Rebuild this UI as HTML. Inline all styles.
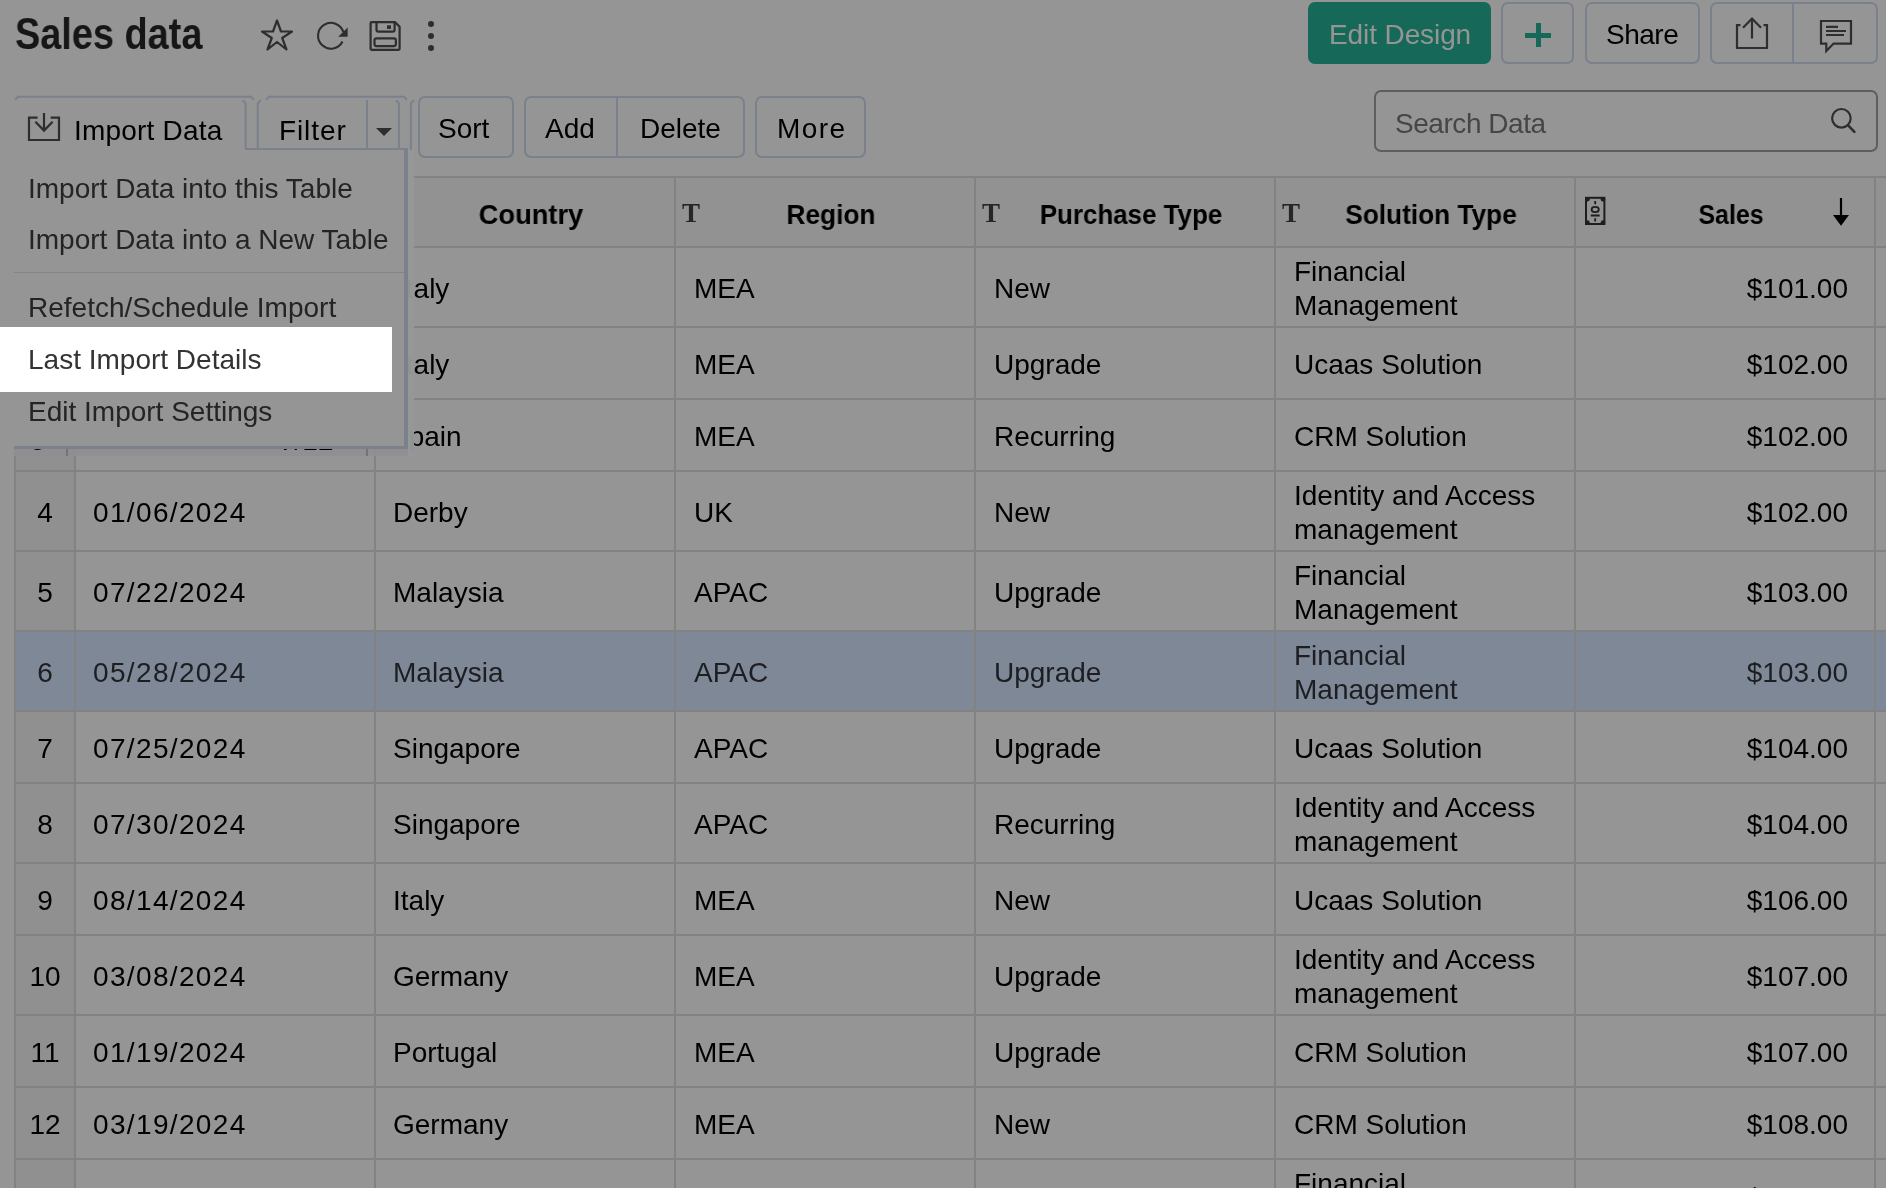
<!DOCTYPE html>
<html><head><meta charset="utf-8"><title>Sales data</title>
<style>
html,body{margin:0;padding:0;}
body{-webkit-font-smoothing:antialiased;width:1886px;height:1188px;overflow:hidden;background:#959595;position:relative;font-family:"Liberation Sans", sans-serif;}
.t{position:absolute;white-space:nowrap;will-change:transform;}
.r{position:absolute;}
</style></head><body>
<div class="t" style="left:15px;top:12.25px;font-size:44px;line-height:44px;font-weight:bold;color:#161616;transform:scaleX(0.861);transform-origin:0 0;">Sales data</div>
<svg class="r" style="left:258px;top:16px;" width="38" height="38" viewBox="0 0 38 38"><path d="M19 4.5 L23 15.5 L34 15.5 L24.2 22 L28.5 33.5 L19 26 L9.5 33.5 L13.8 22 L4 15.5 L15 15.5 Z" fill="none" stroke="#2e2e2e" stroke-width="2.2" stroke-linejoin="round"/></svg>
<svg class="r" style="left:314px;top:18px;" width="38" height="36" viewBox="0 0 38 36"><path d="M28.5 23.5 A12.9 12.9 0 1 1 29.3 14" fill="none" stroke="#2e2e2e" stroke-width="2.1"/><path d="M33.6 9.5 L33.6 18.8 L24.2 18.8 Z" fill="#2e2e2e"/></svg>
<svg class="r" style="left:366px;top:18px;" width="38" height="36" viewBox="0 0 38 36"><path d="M4.6 5.2 Q4.6 4.2 5.6 4.2 L29 4.2 L33.6 8.8 L33.6 30.8 Q33.6 31.8 32.6 31.8 L5.6 31.8 Q4.6 31.8 4.6 30.8 Z" fill="none" stroke="#2e2e2e" stroke-width="2.2"/><path d="M10.5 4.2 L10.5 11.8 Q10.5 13.6 12.3 13.6 L26.8 13.6 Q28.6 13.6 28.6 11.8 L28.6 4.2" fill="none" stroke="#2e2e2e" stroke-width="2.2"/><rect x="21" y="7.3" width="4" height="3.6" fill="#2e2e2e"/><rect x="8.5" y="20.3" width="21.4" height="7.8" rx="2" fill="none" stroke="#2e2e2e" stroke-width="2.2"/></svg>
<svg class="r" style="left:425px;top:18px;" width="12" height="36" viewBox="0 0 12 36"><circle cx="6" cy="6" r="3" fill="#2e2e2e"/><circle cx="6" cy="18" r="3" fill="#2e2e2e"/><circle cx="6" cy="30" r="3" fill="#2e2e2e"/></svg>
<div class="r" style="left:1308px;top:2px;width:183px;height:62px;background:#166958;border-radius:7px;"></div>
<div class="t" style="left:1329px;top:21.39px;font-size:28px;line-height:28px;font-weight:normal;color:#959595;letter-spacing:-0.1px;">Edit Design</div>
<div class="r" style="left:1501px;top:2px;width:73px;height:62px;border:2px solid #7a808c;border-radius:7px;box-sizing:border-box;"></div>
<div class="r" style="left:1525px;top:33px;width:26px;height:4.5px;background:#166958;"></div>
<div class="r" style="left:1536px;top:23px;width:4.5px;height:24px;background:#166958;"></div>
<div class="r" style="left:1585px;top:2px;width:115px;height:62px;border:2px solid #7a808c;border-radius:7px;box-sizing:border-box;"></div>
<div class="t" style="left:1606px;top:21.39px;font-size:28px;line-height:28px;font-weight:normal;color:#000;letter-spacing:-0.5px;">Share</div>
<div class="r" style="left:1710px;top:2px;width:168px;height:62px;border:2px solid #7a808c;border-radius:7px;box-sizing:border-box;"></div>
<div class="r" style="left:1792px;top:2px;width:2px;height:62px;background:#7a808c;"></div>
<svg class="r" style="left:1730px;top:12px;" width="44" height="42" viewBox="0 0 44 42"><path d="M10.5 13.2 L7 13.2 L7 36 L37 36 L37 13.2 L33.5 13.2" fill="none" stroke="#2e2e2e" stroke-width="2.2"/><path d="M22 6.5 L22 26.5 M13 15.8 L22 6.6 L31 15.8" fill="none" stroke="#2e2e2e" stroke-width="2.2"/></svg>
<svg class="r" style="left:1814px;top:14px;" width="44" height="42" viewBox="0 0 44 42"><path d="M7 7 L37 7 L37 29.6 L19.6 29.6 L12.3 37 L12.3 29.6 L7 29.6 Z" fill="none" stroke="#2e2e2e" stroke-width="2.2"/><path d="M12 12.9 L24 12.9 M12 17 L32 17 M12 21 L30 21" fill="none" stroke="#2e2e2e" stroke-width="2.2"/></svg>
<svg class="r" style="left:24px;top:108px;" width="40" height="38" viewBox="0 0 40 38"><path d="M13.6 9.6 L5 9.6 L5 32 L35 32 L35 9.6 L26.7 9.6" fill="none" stroke="#2e2e2e" stroke-width="2.2"/><path d="M20 5 L20 23 M11.4 13.8 L20 22.6 L28.6 13.8" fill="none" stroke="#2e2e2e" stroke-width="2.2"/></svg>
<div class="t" style="left:74px;top:116.79px;font-size:28px;line-height:28px;font-weight:normal;color:#000;letter-spacing:0.2px;">Import Data</div>
<svg class="r" style="left:0px;top:0px" width="430" height="170" viewBox="0 0 430 170"><g fill="none" stroke="#7a808c" stroke-width="2"><path d="M15 99.7 L18 96.7 L251 96.7 L254 99.7"/><path d="M266 99.7 L269 96.7 L404 96.7 L407 99.7"/><path d="M242.6 100.3 L245.6 103.3 L245.6 149"/><path d="M260.7 100.3 L257.7 103.3 L257.7 148"/><path d="M367 100 L367 148"/><path d="M395.9 100.3 L398.9 103.3 L398.9 148"/><path d="M413.9 100.3 L410.9 103.3 L410.9 155 L413.9 158"/></g></svg>
<div class="t" style="left:279px;top:116.79px;font-size:28px;line-height:28px;font-weight:normal;color:#000;letter-spacing:0.9px;">Filter</div>
<svg class="r" style="left:374px;top:126px;" width="20" height="12" viewBox="0 0 20 12"><path d="M2 2 L18 2 L10 10 Z" fill="#2e2e2e"/></svg>
<div class="r" style="left:418px;top:96px;width:96px;height:62px;border:2px solid #7a808c;border-radius:7px;box-sizing:border-box;"></div>
<div class="t" style="left:438px;top:114.79px;font-size:28px;line-height:28px;font-weight:normal;color:#000;">Sort</div>
<div class="r" style="left:524px;top:96px;width:221px;height:62px;border:2px solid #7a808c;border-radius:7px;box-sizing:border-box;"></div>
<div class="r" style="left:616px;top:96px;width:2px;height:62px;background:#7a808c;"></div>
<div class="t" style="left:545px;top:114.79px;font-size:28px;line-height:28px;font-weight:normal;color:#000;">Add</div>
<div class="t" style="left:640px;top:114.79px;font-size:28px;line-height:28px;font-weight:normal;color:#000;">Delete</div>
<div class="r" style="left:755px;top:96px;width:111px;height:62px;border:2px solid #7a808c;border-radius:7px;box-sizing:border-box;"></div>
<div class="t" style="left:777px;top:114.79px;font-size:28px;line-height:28px;font-weight:normal;color:#000;letter-spacing:1.4px;">More</div>
<div class="r" style="left:1374px;top:90px;width:504px;height:62px;border:2px solid #5e5e5e;border-radius:7px;box-sizing:border-box;"></div>
<div class="t" style="left:1395px;top:110.09px;font-size:28px;line-height:28px;font-weight:normal;color:#464646;letter-spacing:-0.45px;">Search Data</div>
<svg class="r" style="left:1826px;top:104px;" width="34" height="34" viewBox="0 0 34 34"><circle cx="15.4" cy="14.3" r="9.3" fill="none" stroke="#2e2e2e" stroke-width="2.2"/><path d="M22.4 21.6 L28.4 27.8" stroke="#2e2e2e" stroke-width="2.6" stroke-linecap="round"/></svg>
<div class="r" style="left:14px;top:176px;width:1872px;height:72px;background:#929292;"></div>
<div class="r" style="left:14px;top:176px;width:1872px;height:2px;background:#828282;"></div>
<div class="r" style="left:14px;top:246px;width:1872px;height:2px;background:#828282;"></div>
<div class="r" style="left:76px;top:248px;width:1810px;height:78px;background:#959595;"></div>
<div class="r" style="left:16px;top:248px;width:58px;height:78px;background:#909090;"></div>
<div class="r" style="left:14px;top:326px;width:1872px;height:2px;background:#828282;"></div>
<div class="r" style="left:76px;top:328px;width:1810px;height:70px;background:#959595;"></div>
<div class="r" style="left:16px;top:328px;width:58px;height:70px;background:#909090;"></div>
<div class="r" style="left:14px;top:398px;width:1872px;height:2px;background:#828282;"></div>
<div class="r" style="left:76px;top:400px;width:1810px;height:70px;background:#959595;"></div>
<div class="r" style="left:16px;top:400px;width:58px;height:70px;background:#909090;"></div>
<div class="r" style="left:14px;top:470px;width:1872px;height:2px;background:#828282;"></div>
<div class="r" style="left:76px;top:472px;width:1810px;height:78px;background:#959595;"></div>
<div class="r" style="left:16px;top:472px;width:58px;height:78px;background:#909090;"></div>
<div class="r" style="left:14px;top:550px;width:1872px;height:2px;background:#828282;"></div>
<div class="r" style="left:76px;top:552px;width:1810px;height:78px;background:#959595;"></div>
<div class="r" style="left:16px;top:552px;width:58px;height:78px;background:#909090;"></div>
<div class="r" style="left:14px;top:630px;width:1872px;height:2px;background:#828282;"></div>
<div class="r" style="left:14px;top:632px;width:1872px;height:78px;background:#7e8896;"></div>
<div class="r" style="left:14px;top:710px;width:1872px;height:2px;background:#828282;"></div>
<div class="r" style="left:76px;top:712px;width:1810px;height:70px;background:#959595;"></div>
<div class="r" style="left:16px;top:712px;width:58px;height:70px;background:#909090;"></div>
<div class="r" style="left:14px;top:782px;width:1872px;height:2px;background:#828282;"></div>
<div class="r" style="left:76px;top:784px;width:1810px;height:78px;background:#959595;"></div>
<div class="r" style="left:16px;top:784px;width:58px;height:78px;background:#909090;"></div>
<div class="r" style="left:14px;top:862px;width:1872px;height:2px;background:#828282;"></div>
<div class="r" style="left:76px;top:864px;width:1810px;height:70px;background:#959595;"></div>
<div class="r" style="left:16px;top:864px;width:58px;height:70px;background:#909090;"></div>
<div class="r" style="left:14px;top:934px;width:1872px;height:2px;background:#828282;"></div>
<div class="r" style="left:76px;top:936px;width:1810px;height:78px;background:#959595;"></div>
<div class="r" style="left:16px;top:936px;width:58px;height:78px;background:#909090;"></div>
<div class="r" style="left:14px;top:1014px;width:1872px;height:2px;background:#828282;"></div>
<div class="r" style="left:76px;top:1016px;width:1810px;height:70px;background:#959595;"></div>
<div class="r" style="left:16px;top:1016px;width:58px;height:70px;background:#909090;"></div>
<div class="r" style="left:14px;top:1086px;width:1872px;height:2px;background:#828282;"></div>
<div class="r" style="left:76px;top:1088px;width:1810px;height:70px;background:#959595;"></div>
<div class="r" style="left:16px;top:1088px;width:58px;height:70px;background:#909090;"></div>
<div class="r" style="left:14px;top:1158px;width:1872px;height:2px;background:#828282;"></div>
<div class="r" style="left:76px;top:1160px;width:1810px;height:78px;background:#959595;"></div>
<div class="r" style="left:16px;top:1160px;width:58px;height:78px;background:#909090;"></div>
<div class="r" style="left:14px;top:1238px;width:1872px;height:2px;background:#828282;"></div>
<div class="r" style="left:14px;top:176px;width:2px;height:1012px;background:#828282;"></div>
<div class="r" style="left:74px;top:176px;width:2px;height:1012px;background:#828282;"></div>
<div class="r" style="left:374px;top:176px;width:2px;height:1012px;background:#828282;"></div>
<div class="r" style="left:674px;top:176px;width:2px;height:1012px;background:#828282;"></div>
<div class="r" style="left:974px;top:176px;width:2px;height:1012px;background:#828282;"></div>
<div class="r" style="left:1274px;top:176px;width:2px;height:1012px;background:#828282;"></div>
<div class="r" style="left:1574px;top:176px;width:2px;height:1012px;background:#828282;"></div>
<div class="r" style="left:1874px;top:176px;width:2px;height:1012px;background:#828282;"></div>
<div class="t" style="left:381px;top:201.29px;width:300px;text-align:center;font-size:28px;line-height:28px;font-weight:bold;color:#000;transform:scaleX(0.9736);transform-origin:150px 0">Country</div>
<div class="t" style="left:681px;top:201.29px;width:300px;text-align:center;font-size:28px;line-height:28px;font-weight:bold;color:#000;transform:scaleX(0.9385);transform-origin:150px 0">Region</div>
<div class="t" style="left:981px;top:201.29px;width:300px;text-align:center;font-size:28px;line-height:28px;font-weight:bold;color:#000;transform:scaleX(0.9253);transform-origin:150px 0">Purchase Type</div>
<div class="t" style="left:1281px;top:201.29px;width:300px;text-align:center;font-size:28px;line-height:28px;font-weight:bold;color:#000;transform:scaleX(0.937);transform-origin:150px 0">Solution Type</div>
<div class="t" style="left:1581px;top:201.29px;width:300px;text-align:center;font-size:28px;line-height:28px;font-weight:bold;color:#000;transform:scaleX(0.8915);transform-origin:150px 0">Sales</div>
<div class="t" style="left:682px;top:200.14px;font-size:27px;line-height:27px;font-weight:bold;color:#262626;font-family:'Liberation Serif', serif;">T</div>
<div class="t" style="left:982px;top:200.14px;font-size:27px;line-height:27px;font-weight:bold;color:#262626;font-family:'Liberation Serif', serif;">T</div>
<div class="t" style="left:1282px;top:200.14px;font-size:27px;line-height:27px;font-weight:bold;color:#262626;font-family:'Liberation Serif', serif;">T</div>
<div class="t" style="left:382px;top:200.14px;font-size:27px;line-height:27px;font-weight:bold;color:#262626;font-family:'Liberation Serif', serif;">T</div>
<svg class="r" style="left:1582px;top:194px;" width="26" height="34" viewBox="0 0 26 34"><rect x="4" y="3.8" width="18.4" height="26.2" fill="none" stroke="#1e1e1e" stroke-width="2"/><circle cx="5.4" cy="5.2" r="2.3" fill="#1e1e1e"/><circle cx="21" cy="5.2" r="2.3" fill="#1e1e1e"/><circle cx="5.4" cy="28.6" r="2.3" fill="#1e1e1e"/><circle cx="21" cy="28.6" r="2.3" fill="#1e1e1e"/><path d="M13.2 7 L13.2 10.2 M13.2 24.2 L13.2 27.4 M8.8 21.5 L17.6 21.5" stroke="#1e1e1e" stroke-width="1.8"/><ellipse cx="13.2" cy="15.5" rx="3.6" ry="2.6" fill="none" stroke="#1e1e1e" stroke-width="1.8"/></svg>
<svg class="r" style="left:1830px;top:196px;" width="22" height="32" viewBox="0 0 22 32"><path d="M11 2 L11 20" stroke="#000" stroke-width="2.2"/><path d="M3 19 L19 19 L11 29.8 Z" fill="#000"/></svg>
<div class="t" style="left:16px;top:274.79px;font-size:28px;line-height:28px;font-weight:normal;color:#000;text-align:center;width:58px;">1</div>
<div class="t" style="left:398px;top:274.79px;font-size:28px;line-height:28px;font-weight:normal;color:#000;">Italy</div>
<div class="t" style="left:694px;top:274.79px;font-size:28px;line-height:28px;font-weight:normal;color:#000;">MEA</div>
<div class="t" style="left:994px;top:274.79px;font-size:28px;line-height:28px;font-weight:normal;color:#000;">New</div>
<div class="t" style="left:1294px;top:257.79px;font-size:28px;line-height:28px;font-weight:normal;color:#000;">Financial</div>
<div class="t" style="left:1294px;top:291.79px;font-size:28px;line-height:28px;font-weight:normal;color:#000;">Management</div>
<div class="t" style="left:1576px;top:274.79px;font-size:28px;line-height:28px;font-weight:normal;color:#000;text-align:right;width:272px;">$101.00</div>
<div class="t" style="left:16px;top:350.79px;font-size:28px;line-height:28px;font-weight:normal;color:#000;text-align:center;width:58px;">2</div>
<div class="t" style="left:398px;top:350.79px;font-size:28px;line-height:28px;font-weight:normal;color:#000;">Italy</div>
<div class="t" style="left:694px;top:350.79px;font-size:28px;line-height:28px;font-weight:normal;color:#000;">MEA</div>
<div class="t" style="left:994px;top:350.79px;font-size:28px;line-height:28px;font-weight:normal;color:#000;">Upgrade</div>
<div class="t" style="left:1294px;top:350.79px;font-size:28px;line-height:28px;font-weight:normal;color:#000;">Ucaas Solution</div>
<div class="t" style="left:1576px;top:350.79px;font-size:28px;line-height:28px;font-weight:normal;color:#000;text-align:right;width:272px;">$102.00</div>
<div class="t" style="left:16px;top:422.79px;font-size:28px;line-height:28px;font-weight:normal;color:#000;text-align:center;width:58px;">3</div>
<div class="t" style="left:390px;top:422.79px;font-size:28px;line-height:28px;font-weight:normal;color:#000;">Spain</div>
<div class="t" style="left:694px;top:422.79px;font-size:28px;line-height:28px;font-weight:normal;color:#000;">MEA</div>
<div class="t" style="left:994px;top:422.79px;font-size:28px;line-height:28px;font-weight:normal;color:#000;">Recurring</div>
<div class="t" style="left:1294px;top:422.79px;font-size:28px;line-height:28px;font-weight:normal;color:#000;">CRM Solution</div>
<div class="t" style="left:1576px;top:422.79px;font-size:28px;line-height:28px;font-weight:normal;color:#000;text-align:right;width:272px;">$102.00</div>
<div class="t" style="left:16px;top:498.79px;font-size:28px;line-height:28px;font-weight:normal;color:#000;text-align:center;width:58px;">4</div>
<div class="t" style="left:93px;top:498.79px;font-size:28px;line-height:28px;font-weight:normal;color:#000;letter-spacing:1.35px;">01/06/2024</div>
<div class="t" style="left:393px;top:498.79px;font-size:28px;line-height:28px;font-weight:normal;color:#000;">Derby</div>
<div class="t" style="left:694px;top:498.79px;font-size:28px;line-height:28px;font-weight:normal;color:#000;">UK</div>
<div class="t" style="left:994px;top:498.79px;font-size:28px;line-height:28px;font-weight:normal;color:#000;">New</div>
<div class="t" style="left:1294px;top:481.79px;font-size:28px;line-height:28px;font-weight:normal;color:#000;">Identity and Access</div>
<div class="t" style="left:1294px;top:515.79px;font-size:28px;line-height:28px;font-weight:normal;color:#000;">management</div>
<div class="t" style="left:1576px;top:498.79px;font-size:28px;line-height:28px;font-weight:normal;color:#000;text-align:right;width:272px;">$102.00</div>
<div class="t" style="left:16px;top:578.79px;font-size:28px;line-height:28px;font-weight:normal;color:#000;text-align:center;width:58px;">5</div>
<div class="t" style="left:93px;top:578.79px;font-size:28px;line-height:28px;font-weight:normal;color:#000;letter-spacing:1.35px;">07/22/2024</div>
<div class="t" style="left:393px;top:578.79px;font-size:28px;line-height:28px;font-weight:normal;color:#000;">Malaysia</div>
<div class="t" style="left:694px;top:578.79px;font-size:28px;line-height:28px;font-weight:normal;color:#000;">APAC</div>
<div class="t" style="left:994px;top:578.79px;font-size:28px;line-height:28px;font-weight:normal;color:#000;">Upgrade</div>
<div class="t" style="left:1294px;top:561.79px;font-size:28px;line-height:28px;font-weight:normal;color:#000;">Financial</div>
<div class="t" style="left:1294px;top:595.79px;font-size:28px;line-height:28px;font-weight:normal;color:#000;">Management</div>
<div class="t" style="left:1576px;top:578.79px;font-size:28px;line-height:28px;font-weight:normal;color:#000;text-align:right;width:272px;">$103.00</div>
<div class="t" style="left:16px;top:658.79px;font-size:28px;line-height:28px;font-weight:normal;color:#1c1e22;text-align:center;width:58px;">6</div>
<div class="t" style="left:93px;top:658.79px;font-size:28px;line-height:28px;font-weight:normal;color:#1c1e22;letter-spacing:1.35px;">05/28/2024</div>
<div class="t" style="left:393px;top:658.79px;font-size:28px;line-height:28px;font-weight:normal;color:#1c1e22;">Malaysia</div>
<div class="t" style="left:694px;top:658.79px;font-size:28px;line-height:28px;font-weight:normal;color:#1c1e22;">APAC</div>
<div class="t" style="left:994px;top:658.79px;font-size:28px;line-height:28px;font-weight:normal;color:#1c1e22;">Upgrade</div>
<div class="t" style="left:1294px;top:641.79px;font-size:28px;line-height:28px;font-weight:normal;color:#1c1e22;">Financial</div>
<div class="t" style="left:1294px;top:675.79px;font-size:28px;line-height:28px;font-weight:normal;color:#1c1e22;">Management</div>
<div class="t" style="left:1576px;top:658.79px;font-size:28px;line-height:28px;font-weight:normal;color:#1c1e22;text-align:right;width:272px;">$103.00</div>
<div class="t" style="left:16px;top:734.79px;font-size:28px;line-height:28px;font-weight:normal;color:#000;text-align:center;width:58px;">7</div>
<div class="t" style="left:93px;top:734.79px;font-size:28px;line-height:28px;font-weight:normal;color:#000;letter-spacing:1.35px;">07/25/2024</div>
<div class="t" style="left:393px;top:734.79px;font-size:28px;line-height:28px;font-weight:normal;color:#000;">Singapore</div>
<div class="t" style="left:694px;top:734.79px;font-size:28px;line-height:28px;font-weight:normal;color:#000;">APAC</div>
<div class="t" style="left:994px;top:734.79px;font-size:28px;line-height:28px;font-weight:normal;color:#000;">Upgrade</div>
<div class="t" style="left:1294px;top:734.79px;font-size:28px;line-height:28px;font-weight:normal;color:#000;">Ucaas Solution</div>
<div class="t" style="left:1576px;top:734.79px;font-size:28px;line-height:28px;font-weight:normal;color:#000;text-align:right;width:272px;">$104.00</div>
<div class="t" style="left:16px;top:810.79px;font-size:28px;line-height:28px;font-weight:normal;color:#000;text-align:center;width:58px;">8</div>
<div class="t" style="left:93px;top:810.79px;font-size:28px;line-height:28px;font-weight:normal;color:#000;letter-spacing:1.35px;">07/30/2024</div>
<div class="t" style="left:393px;top:810.79px;font-size:28px;line-height:28px;font-weight:normal;color:#000;">Singapore</div>
<div class="t" style="left:694px;top:810.79px;font-size:28px;line-height:28px;font-weight:normal;color:#000;">APAC</div>
<div class="t" style="left:994px;top:810.79px;font-size:28px;line-height:28px;font-weight:normal;color:#000;">Recurring</div>
<div class="t" style="left:1294px;top:793.79px;font-size:28px;line-height:28px;font-weight:normal;color:#000;">Identity and Access</div>
<div class="t" style="left:1294px;top:827.79px;font-size:28px;line-height:28px;font-weight:normal;color:#000;">management</div>
<div class="t" style="left:1576px;top:810.79px;font-size:28px;line-height:28px;font-weight:normal;color:#000;text-align:right;width:272px;">$104.00</div>
<div class="t" style="left:16px;top:886.79px;font-size:28px;line-height:28px;font-weight:normal;color:#000;text-align:center;width:58px;">9</div>
<div class="t" style="left:93px;top:886.79px;font-size:28px;line-height:28px;font-weight:normal;color:#000;letter-spacing:1.35px;">08/14/2024</div>
<div class="t" style="left:393px;top:886.79px;font-size:28px;line-height:28px;font-weight:normal;color:#000;">Italy</div>
<div class="t" style="left:694px;top:886.79px;font-size:28px;line-height:28px;font-weight:normal;color:#000;">MEA</div>
<div class="t" style="left:994px;top:886.79px;font-size:28px;line-height:28px;font-weight:normal;color:#000;">New</div>
<div class="t" style="left:1294px;top:886.79px;font-size:28px;line-height:28px;font-weight:normal;color:#000;">Ucaas Solution</div>
<div class="t" style="left:1576px;top:886.79px;font-size:28px;line-height:28px;font-weight:normal;color:#000;text-align:right;width:272px;">$106.00</div>
<div class="t" style="left:16px;top:962.79px;font-size:28px;line-height:28px;font-weight:normal;color:#000;text-align:center;width:58px;">10</div>
<div class="t" style="left:93px;top:962.79px;font-size:28px;line-height:28px;font-weight:normal;color:#000;letter-spacing:1.35px;">03/08/2024</div>
<div class="t" style="left:393px;top:962.79px;font-size:28px;line-height:28px;font-weight:normal;color:#000;">Germany</div>
<div class="t" style="left:694px;top:962.79px;font-size:28px;line-height:28px;font-weight:normal;color:#000;">MEA</div>
<div class="t" style="left:994px;top:962.79px;font-size:28px;line-height:28px;font-weight:normal;color:#000;">Upgrade</div>
<div class="t" style="left:1294px;top:945.79px;font-size:28px;line-height:28px;font-weight:normal;color:#000;">Identity and Access</div>
<div class="t" style="left:1294px;top:979.79px;font-size:28px;line-height:28px;font-weight:normal;color:#000;">management</div>
<div class="t" style="left:1576px;top:962.79px;font-size:28px;line-height:28px;font-weight:normal;color:#000;text-align:right;width:272px;">$107.00</div>
<div class="t" style="left:16px;top:1038.79px;font-size:28px;line-height:28px;font-weight:normal;color:#000;text-align:center;width:58px;">11</div>
<div class="t" style="left:93px;top:1038.79px;font-size:28px;line-height:28px;font-weight:normal;color:#000;letter-spacing:1.35px;">01/19/2024</div>
<div class="t" style="left:393px;top:1038.79px;font-size:28px;line-height:28px;font-weight:normal;color:#000;">Portugal</div>
<div class="t" style="left:694px;top:1038.79px;font-size:28px;line-height:28px;font-weight:normal;color:#000;">MEA</div>
<div class="t" style="left:994px;top:1038.79px;font-size:28px;line-height:28px;font-weight:normal;color:#000;">Upgrade</div>
<div class="t" style="left:1294px;top:1038.79px;font-size:28px;line-height:28px;font-weight:normal;color:#000;">CRM Solution</div>
<div class="t" style="left:1576px;top:1038.79px;font-size:28px;line-height:28px;font-weight:normal;color:#000;text-align:right;width:272px;">$107.00</div>
<div class="t" style="left:16px;top:1110.79px;font-size:28px;line-height:28px;font-weight:normal;color:#000;text-align:center;width:58px;">12</div>
<div class="t" style="left:93px;top:1110.79px;font-size:28px;line-height:28px;font-weight:normal;color:#000;letter-spacing:1.35px;">03/19/2024</div>
<div class="t" style="left:393px;top:1110.79px;font-size:28px;line-height:28px;font-weight:normal;color:#000;">Germany</div>
<div class="t" style="left:694px;top:1110.79px;font-size:28px;line-height:28px;font-weight:normal;color:#000;">MEA</div>
<div class="t" style="left:994px;top:1110.79px;font-size:28px;line-height:28px;font-weight:normal;color:#000;">New</div>
<div class="t" style="left:1294px;top:1110.79px;font-size:28px;line-height:28px;font-weight:normal;color:#000;">CRM Solution</div>
<div class="t" style="left:1576px;top:1110.79px;font-size:28px;line-height:28px;font-weight:normal;color:#000;text-align:right;width:272px;">$108.00</div>
<div class="t" style="left:16px;top:1186.79px;font-size:28px;line-height:28px;font-weight:normal;color:#000;text-align:center;width:58px;">13</div>
<div class="t" style="left:1294px;top:1169.79px;font-size:28px;line-height:28px;font-weight:normal;color:#000;">Financial</div>
<div class="t" style="left:1294px;top:1203.79px;font-size:28px;line-height:28px;font-weight:normal;color:#000;">Management</div>
<div class="t" style="left:1576px;top:1183.79px;font-size:28px;line-height:28px;font-weight:normal;color:#000;text-align:right;width:272px;">$108.00</div>
<div class="r" style="left:14px;top:150px;width:390px;height:296px;background:#959595;"></div>
<div class="r" style="left:245px;top:148px;width:161px;height:2px;background:#7a808c;"></div>
<div class="r" style="left:404px;top:148px;width:3.5px;height:301.3px;background:#7a808c;"></div>
<div class="r" style="left:14px;top:446px;width:393.5px;height:3.3px;background:#7a808c;"></div>
<div class="r" style="left:407.5px;top:150px;width:6.3px;height:305.5px;background:rgba(150,151,153,0.97);"></div>
<div class="r" style="left:14px;top:449.3px;width:393.5px;height:6.5px;background:rgba(143,143,145,0.9);"></div>
<div class="r" style="left:14px;top:449.3px;width:393px;height:6.5px;overflow:hidden"><div class="t" style="left:16px;top:-22.5px;font-size:28px;line-height:28px;color:#000">3</div><div class="t" style="left:265px;top:-22.5px;font-size:28px;line-height:28px;color:#000">7/12</div><div class="r" style="left:52px;top:0;width:1.5px;height:6.5px;background:#6f7480"></div><div class="r" style="left:352px;top:0;width:1.5px;height:6.5px;background:#6f7480"></div></div>
<div class="r" style="left:14px;top:272px;width:390px;height:1px;background:#858585;"></div>
<div class="t" style="left:28px;top:174.59px;font-size:28px;line-height:28px;font-weight:normal;color:#242424;">Import Data into this Table</div>
<div class="t" style="left:28px;top:226.19px;font-size:28px;line-height:28px;font-weight:normal;color:#242424;">Import Data into a New Table</div>
<div class="t" style="left:28px;top:294.09px;font-size:28px;line-height:28px;font-weight:normal;color:#242424;">Refetch/Schedule Import</div>
<div class="r" style="left:0px;top:327px;width:392px;height:65px;background:#ffffff;"></div>
<div class="t" style="left:28px;top:346.39px;font-size:28px;line-height:28px;font-weight:normal;color:#333333;">Last Import Details</div>
<div class="t" style="left:28px;top:398.49px;font-size:28px;line-height:28px;font-weight:normal;color:#242424;">Edit Import Settings</div>
</body></html>
